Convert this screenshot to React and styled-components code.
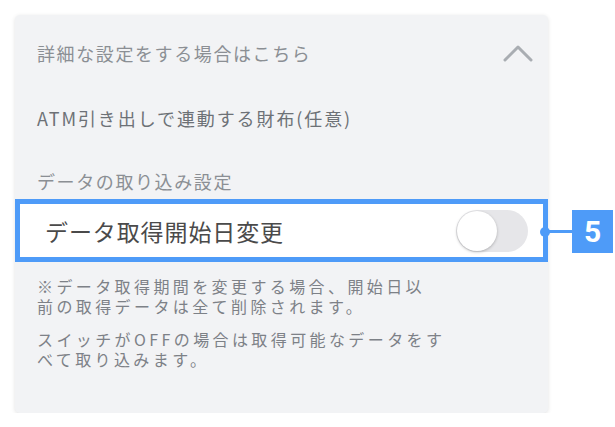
import React from 'react';
import styled, { createGlobalStyle } from 'styled-components';

const GlobalStyle = createGlobalStyle`
  body {
    margin: 0;
    background: #fff;
    font-family: "Noto Sans CJK JP", "Noto Sans", sans-serif;
  }
`;

const Page = styled.div`
  padding: 15px 0 0 15px;
`;

const Card = styled.div`
  position: relative;
  width: 533px;
  background: #f2f3f5;
  border-radius: 5px;
  box-shadow: 0 1px 4px rgba(0, 0, 0, 0.12);
  padding: 26px 0 44px;
`;

const Header = styled.div`
  display: flex;
  align-items: center;
  justify-content: space-between;
  padding: 0 15px 0 22px;
  height: 24px;
`;

const Title = styled.span`
  font-size: 18px;
  color: #8b8f94;
  letter-spacing: 1.6px;
`;

const Label = styled.div`
  font-size: 18px;
  line-height: 24px;
  color: ${({ color }) => color || '#8b8f94'};
  padding: 0 22px;
  margin-top: ${({ top }) => top || 0}px;
  letter-spacing: ${({ spacing }) => spacing ?? 1.6}px;
`;

const Row = styled.div`
  margin-top: 6px;
  height: 63px;
  box-sizing: border-box;
  border: 5px solid #4e9bf8;
  background: #fff;
  display: flex;
  align-items: center;
  justify-content: space-between;
  padding: 0 15px 0 25px;
`;

const RowText = styled.span`
  font-size: 23px;
  color: #4a4a4a;
  letter-spacing: 0.9px;
`;

const Switch = styled.div`
  width: 72px;
  height: 42px;
  border-radius: 21px;
  background: #e6e6e9;
  display: flex;
  align-items: center;
  padding-left: 1px;
  box-sizing: border-box;
`;

const Knob = styled.div`
  width: 40px;
  height: 40px;
  border-radius: 50%;
  background: #fff;
  box-shadow: 0 1px 3px rgba(0, 0, 0, 0.25);
`;

const Note = styled.p`
  margin: ${({ top }) => top}px 0 0 22px;
  width: ${({ width }) => width}px;
  font-size: 16px;
  line-height: 19.5px;
  color: #7d8187;
  letter-spacing: 3.4px;
`;

// callout marker hanging off the right edge of the row
const Callout = styled.div`
  position: absolute;
  left: 525px;
  top: 195px;
  display: flex;
  align-items: center;
`;

const Dot = styled.div`
  width: 10px;
  height: 10px;
  border-radius: 50%;
  background: #4e9bf8;
`;

const Line = styled.div`
  width: 25px;
  height: 3px;
  background: #4e9bf8;
  margin-left: -3px;
`;

const Badge = styled.div`
  width: 41px;
  height: 43px;
  background: #4e9bf8;
  color: #fff;
  font-family: "Roboto", "Liberation Sans", sans-serif;
  font-weight: 700;
  font-size: 30px;
  display: flex;
  align-items: center;
  justify-content: center;
`;

const Chevron = () => (
  <svg width="30" height="18" viewBox="0 0 30 18">
    <path d="M2 16 L15 3 L28 16" fill="none" stroke="#a9adb2" strokeWidth="3" strokeLinecap="round" strokeLinejoin="round" />
  </svg>
);

export default function App() {
  return (
    <Page>
      <GlobalStyle />
      <Card>
        <Header>
          <Title>詳細な設定をする場合はこちら</Title>
          <Chevron />
        </Header>
        <Label top={41} color="#6d7176" spacing={1.9}>ATM引き出しで連動する財布(任意)</Label>
        <Label top={39}>データの取り込み設定</Label>
        <Row>
          <RowText>データ取得開始日変更</RowText>
          <Switch>
            <Knob />
          </Switch>
        </Row>
        <Note top={15} width={396}>
          ※データ取得期間を変更する場合、開始日以前の取得データは全て削除されます。
        </Note>
        <Note top={14} width={414}>
          スイッチがOFFの場合は取得可能なデータをすべて取り込みます。
        </Note>
        <Callout>
          <Dot />
          <Line />
          <Badge>5</Badge>
        </Callout>
      </Card>
    </Page>
  );
}
